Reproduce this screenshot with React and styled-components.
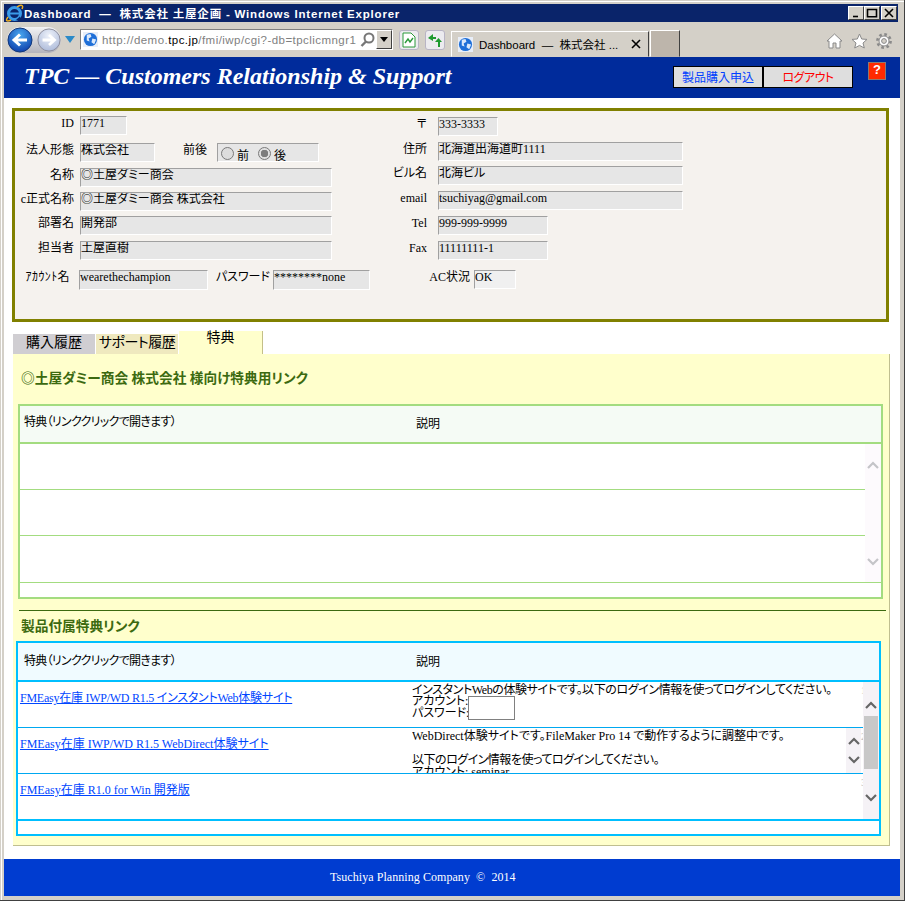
import React from 'react'
import styled, { createGlobalStyle } from 'styled-components'

const serif = `"Liberation Serif", "Noto Sans CJK JP", serif`
const sans = `"Liberation Sans", "Noto Sans CJK JP", sans-serif`

const Global = createGlobalStyle`
  html, body { margin: 0; padding: 0; overflow: hidden; background: #d4d0c8; }
  * { box-sizing: border-box; }
`

const Win = styled.div`
  width: 905px;
  height: 901px;
  padding: 4px 4px 4px 4px;
  display: flex;
  flex-direction: column;
  background: #d4d0c8;
  border-right: 1px solid #404040;
  border-bottom: 1px solid #404040;
  box-shadow: inset 1px 1px 0 #d4d0c8, inset 2px 2px 0 #fff;
  font-family: ${serif};
  font-size: 12px;
  font-feature-settings: "palt";
  color: #000;
`

/* ---- window chrome ---- */
const TitleBar = styled.div`
  height: 18px;
  flex: none;
  background: #0a246a;
  display: flex;
  align-items: center;
  padding: 0 1px 0 1px;
  margin-right: 2px;
`
const TitleText = styled.div`
  flex: 1;
  color: #fff;
  font: bold 11.5px ${sans};
  font-feature-settings: normal;
  letter-spacing: 0.8px;
  white-space: pre;
`
const WinBtn = styled.div`
  width: 16px;
  height: 14px;
  margin-left: ${p => p.$gap || 0}px;
  background: #d4d0c8;
  border: 1px solid;
  border-color: #fff #404040 #404040 #fff;
  display: flex;
  align-items: center;
  justify-content: center;
`
const Toolbar = styled.div`
  height: 35px;
  flex: none;
  display: flex;
  align-items: flex-end;
  padding-left: 3px;
  background: #d4d0c8;
`
const NavGroup = styled.div`
  width: 73px;
  height: 100%;
  display: flex;
  align-items: center;
`
const NavCapsule = styled.div`
  width: 54px;
  height: 26px;
  flex: none;
  display: flex;
  align-items: center;
  justify-content: space-between;
  border-radius: 13px;
  background: linear-gradient(#f2f2f4, #b4b4bc);
`
const AddressBox = styled.div`
  width: 313px;
  height: 21px;
  margin-bottom: 7px;
  display: flex;
  align-items: center;
  background: #fff;
  border: 1px solid #808080;
  border-right-color: #fff;
  border-bottom-color: #fff;
  outline: 1px solid #d4d0c8;
  padding-left: 2px;
`
const AddressText = styled.div`
  width: 257px;
  margin-left: 4px;
  overflow: hidden;
  white-space: nowrap;
  font: 11.5px ${sans};
  letter-spacing: 0.45px;
  color: #808080;
  b { font-weight: normal; color: #000; }
`
const ComboBtn = styled.div`
  width: 16px;
  height: 19px;
  margin-left: 1px;
  background: #d4d0c8;
  border: 1px solid;
  border-color: #fff #404040 #404040 #fff;
  display: flex;
  align-items: center;
  justify-content: center;
`
const ToolBtn = styled.div`
  width: 20px;
  height: 20px;
  margin: 0 0 7px ${p => p.$gap}px;
  border: 1px solid #b8b4c4;
  border-radius: 3px;
  background: #ecebef;
  display: flex;
  align-items: center;
  justify-content: center;
`
const BrowserTab = styled.div`
  width: 198px;
  height: 26px;
  margin-left: 6px;
  display: flex;
  align-items: center;
  padding: 0 6px;
  background: #d4d0c8;
  border: 1px solid;
  border-color: #fff #404040 transparent #fff;
  font: 11.5px ${sans};
  font-feature-settings: normal;
  white-space: pre;
`
const TabLabel = styled.span`
  flex: 1;
  margin-left: 6px;
`
const NewTab = styled.div`
  width: 30px;
  height: 27px;
  margin-left: 1px;
  background: #bdb5ab;
  border: 1px solid;
  border-color: #fff #404040 transparent #fff;
`
const ChromeIcons = styled.div`
  margin: 0 0 8px auto;
  display: flex;
  align-items: center;
  gap: 8px;
  padding-right: 8px;
`

/* ---- page header ---- */
const Header = styled.div`
  height: 41px;
  flex: none;
  background: #002b9b;
  display: flex;
  align-items: flex-start;
`
const Brand = styled.div`
  margin: 3px 0 0 20px;
  width: 649px;
  font: italic bold 24px/32px ${serif};
  color: #fff;
  white-space: nowrap;
`
const BrandDash = styled.span`
  letter-spacing: 6px;
`
const HeadBtn = styled.div`
  width: ${p => p.$w}px;
  height: 22px;
  margin-top: 9px;
  border: 1px solid #000;
  background: #dedede;
  color: ${p => p.$color};
  display: flex;
  align-items: center;
  justify-content: center;
  font-size: 12px;
  letter-spacing: ${p => p.$track || 0}px;
`
const Help = styled.div`
  width: 18px;
  height: 18px;
  margin: 5px 0 0 15px;
  background: #ff2a00;
  border: 1px solid #8c7a70;
  color: #fff;
  font: bold 13px/13px ${sans};
  text-align: center;
`

/* ---- main ---- */
const Main = styled.div`
  flex: 1;
  background: #fff;
  padding: 10px 0 0 8px;
`
const InfoPanel = styled.div`
  width: 877px;
  height: 214px;
  background: #f5f2ee;
  border: 3px solid #808000;
  display: flex;
`
const Col = styled.div`
  width: ${p => p.$w}px;
  padding-top: ${p => p.$top}px;
`
const Row = styled.div`
  display: flex;
  height: ${p => p.$h || 19}px;
  margin-top: ${p => p.$top || 0}px;
`
const Label = styled.div`
  width: ${p => p.$w}px;
  margin-right: ${p => p.$gap}px;
  text-align: right;
  line-height: 14px;
  white-space: nowrap;
  flex: none;
  letter-spacing: ${p => p.$track || 0}px;
`
const Field = styled.div`
  width: ${p => p.$w}px;
  height: 100%;
  flex: none;
  background: ${p => p.$bg || '#e6e6e6'};
  border: 1px solid;
  border-color: #a0a0a0 #fff #fff #a0a0a0;
  line-height: 13px;
  white-space: nowrap;
  overflow: hidden;
`
const RadioBox = styled(Field)`
  display: flex;
  align-items: flex-start;
  padding: 3px 0 0 3px;
`
const Radio = styled.span`
  width: 13px;
  height: 13px;
  flex: none;
  border-radius: 50%;
  border: 1px solid #7a7a7a;
  background: ${p => (p.$on ? 'radial-gradient(circle, #7d7d7d 0 3.5px, #e0e0e0 4px)' : '#dcdcdc')};
`
const RadioText = styled.span`
  width: ${p => p.$w}px;
  padding: 3px 0 0 3px;
  flex: none;
  line-height: 13px;
`

const Tabs = styled.div`
  margin: 9px 0 0 1px;
  height: 23px;
  display: flex;
  align-items: flex-end;
`
const Tab = styled.div`
  width: ${p => p.$w}px;
  height: ${p => p.$h}px;
  margin-right: 1px;
  background: ${p => p.$bg};
  border-right: ${p => (p.$active ? '1px solid #c4bf88' : 'none')};
  text-align: center;
  font-size: 14px;
  letter-spacing: ${p => p.$track || 0}px;
  line-height: ${p => (p.$active ? 14 : 18)}px;
  white-space: nowrap;
`
const TabBody = styled.div`
  width: 877px;
  height: 492px;
  margin-left: 1px;
  padding-left: 5px;
  background: #ffffcc;
  border-right: 1px solid #c0bf90;
  border-bottom: 1px solid #c0bf90;
`
const Heading = styled.div`
  height: ${p => p.$h}px;
  padding: 0 0 ${p => p.$lift}px 3px;
  display: flex;
  align-items: center;
  color: #3c6a10;
  font-weight: bold;
  font-size: 13.7px;
  white-space: nowrap;
`
const Table = styled.div`
  width: 865px;
  height: 195px;
  margin-left: ${p => p.$left || 0}px;
  border: 2px solid ${p => p.$color};
  background: #fff;
  display: flex;
  flex-direction: column;
`
const THead = styled.div`
  height: ${p => p.$h}px;
  flex: none;
  display: grid;
  grid-template-columns: ${p => p.$first}px 1fr;
  background: ${p => p.$bg};
  border-bottom: 2px solid ${p => p.$color};
  box-sizing: content-box;
  align-items: center;
`
const HeadCell = styled.div`
  padding-left: ${p => p.$pad}px;
  margin-top: ${p => p.$top || 0}px;
  letter-spacing: ${p => p.$track || 0}px;
  white-space: nowrap;
`
const TBodyWrap = styled.div`
  display: flex;
  height: ${p => p.$h}px;
  flex: none;
  border-bottom: ${p => p.$line};
  box-sizing: content-box;
`
const Rows = styled.div`
  flex: 1;
  display: flex;
  flex-direction: column;
`
const TRow = styled.div`
  height: ${p => p.$h || 45}px;
  flex: none;
  box-sizing: content-box;
  display: grid;
  grid-template-columns: 394px 1fr;
  border-top: ${p => (p.$first ? 'none' : `1px solid ${p.$color}`)};
`
const LinkCell = styled.div`
  padding: 6px 0 0 2px;
`
const ItemLink = styled.a`
  color: #0046ff;
  text-decoration: underline;
  white-space: nowrap;
  letter-spacing: ${p => p.$track || 0}px;
`
const DescCell = styled.div`
  display: flex;
  height: 45px;
  overflow: hidden;
`
const DescText = styled.div`
  flex: 1;
  overflow: hidden;
  line-height: 12px;
  white-space: nowrap;
  padding-top: 2px;
`
const DescLine = styled.div`
  letter-spacing: ${p => p.$track || 0}px;
`
const Blank = styled.div`
  height: 12px;
`
const CredRow = styled.div`
  display: flex;
  align-items: flex-start;
`
const CredLabels = styled.div`
  width: 56px;
  flex: none;
  line-height: 11.5px;
`
const PassInput = styled.div`
  width: 47px;
  height: 24px;
  flex: none;
  background: #fff;
  border: 1px solid #808080;
`
const RowNo = styled.div`
  width: 2px;
  flex: none;
  margin-top: ${p => p.$top}px;
  color: #c0c0c0;
  font-size: 10px;
  line-height: 10px;
  overflow: hidden;
`
const Scroll = styled.div`
  width: ${p => p.$w || 16}px;
  flex: none;
  background: ${p => p.$bg};
  display: flex;
  flex-direction: column;
  align-items: center;
  padding: ${p => p.$pad};
  justify-content: ${p => p.$justify || 'space-between'};
`
const Thumb = styled.div`
  width: 14px;
  height: 53px;
  margin: 7px 0 25px;
  flex: none;
  background: #c8c8c8;
`
const Strip = styled.div`
  flex: 1;
`
const Divider = styled.div`
  width: 867px;
  height: 1px;
  margin: 11px 0 0 1px;
  background: #3c6a10;
`

const Footer = styled.div`
  height: 37px;
  flex: none;
  background: #003cd0;
  color: #fff;
  display: flex;
  align-items: center;
  padding-left: 326px;
  font-size: 12px;
  letter-spacing: 0.06px;
  white-space: pre;
`

/* ---- drawings ---- */
const Chevron = ({ up, color, size = 12 }) => (
  <svg width={size} height={size * 0.75} viewBox="0 0 12 9">
    <polyline points={up ? '1,8 6,3 11,8' : '1,1 6,6 11,1'} fill="none" stroke={color} strokeWidth="2.2" />
  </svg>
)

const Globe = ({ size = 15 }) => (
  <svg width={size} height={size} viewBox="0 0 16 16" style={{ flex: 'none' }}>
    <rect width="16" height="16" fill="#e8eef8" />
    <circle cx="8" cy="8" r="7" fill="#1e6fd8" />
    <path d="M4 3 L8 2 L9 5 L6 7 L7 10 L4 9 Z M10 7 L14 8 L12 13 L9 11 Z" fill="#dbe9fb" />
  </svg>
)

const IeLogo = () => (
  <svg width="19" height="18" viewBox="0 0 19 18" style={{ flex: 'none' }}>
    <circle cx="9.5" cy="9.5" r="6" fill="none" stroke="#3a9be8" strokeWidth="3" />
    <path d="M4 9.5 H15" stroke="#3a9be8" strokeWidth="2" />
    <path d="M15 12.5 L11 16 H16 Z" fill="#0a246a" />
    <path d="M3 13 C0 17 2 18 6 16 M12 3 C16 0 19 1 17 5" fill="none" stroke="#f0b020" strokeWidth="1.5" />
  </svg>
)

const NavRound = ({ pale, size = 26 }) => (
  <svg width={size} height={size} viewBox="0 0 26 26" style={{ flex: 'none' }}>
    <defs>
      <radialGradient id={pale ? 'navPale' : 'navBlue'} cx="50%" cy="30%" r="75%">
        <stop offset="0" stopColor={pale ? '#eef2fa' : '#4aa8f0'} />
        <stop offset="1" stopColor={pale ? '#aab8d8' : '#0a3aa8'} />
      </radialGradient>
    </defs>
    <circle cx="13" cy="13" r="12" fill={`url(#${pale ? 'navPale' : 'navBlue'})`} stroke={pale ? '#8a8a98' : '#12387a'} />
    <path
      d={pale ? 'M6 13 H18 M13 7.5 L19 13 L13 18.5' : 'M20 13 H8 M13 7.5 L7 13 L13 18.5'}
      fill="none"
      stroke="#fff"
      strokeWidth="3"
    />
  </svg>
)

const DropArrow = () => (
  <svg width="10" height="7" viewBox="0 0 10 7" style={{ flex: 'none', marginLeft: 4 }}>
    <path d="M0 0 H10 L5 7 Z" fill="#2a8ac8" />
  </svg>
)

const SearchIcon = () => (
  <svg width="15" height="15" viewBox="0 0 15 15" style={{ flex: 'none', marginLeft: 4 }}>
    <circle cx="9" cy="6" r="4.5" fill="none" stroke="#777" strokeWidth="2" />
    <path d="M6 9.5 L1.5 14" stroke="#777" strokeWidth="2.4" />
  </svg>
)

const DocIcon = () => (
  <svg width="14" height="16" viewBox="0 0 14 16">
    <path d="M1 1 H9 L13 5 V15 H1 Z" fill="#fff" stroke="#2a9a3a" />
    <path d="M3 11 L6 7 L8 10 L11 6" fill="none" stroke="#2a9a3a" strokeWidth="1.4" />
  </svg>
)

const RefreshIcon = () => (
  <svg width="16" height="15" viewBox="0 0 16 15">
    <path d="M6 1 L1 5 L6 8 V6 H9 V4 H6 Z" fill="#1f9a30" />
    <path d="M11 14 V9 H8 L11.5 5 L15 9 H13 V14 Z" fill="#1f9a30" />
  </svg>
)

const HomeIcon = () => (
  <svg width="17" height="16" viewBox="0 0 17 16">
    <path d="M1 8 L8.5 1 L16 8 L14 8 V15 H10 V10 H7 V15 H3 V8 Z" fill="#fff" stroke="#8a8a8a" />
  </svg>
)

const StarIcon = () => (
  <svg width="17" height="16" viewBox="0 0 17 16">
    <path d="M8.5 1 L10.7 6 L16 6.4 L12 10 L13.3 15 L8.5 12.4 L3.7 15 L5 10 L1 6.4 L6.3 6 Z" fill="#fff" stroke="#8a8a8a" />
  </svg>
)

const GearIcon = () => (
  <svg width="16" height="16" viewBox="0 0 16 16">
    <circle cx="8" cy="8" r="6.6" fill="none" stroke="#8a8a8a" strokeWidth="2.6" strokeDasharray="2.6 2.6" />
    <circle cx="8" cy="8" r="5" fill="#fff" stroke="#8a8a8a" strokeWidth="1" />
    <circle cx="8" cy="8" r="2.4" fill="#d4d0c8" stroke="#8a8a8a" />
  </svg>
)

const WinGlyph = ({ d }) => (
  <svg width="12" height="10" viewBox="0 0 12 10">
    <path d={d} fill="none" stroke="#000" strokeWidth="1.6" />
  </svg>
)

const leftRows = [
  { label: '名称', value: '◎土屋ダミー商会', top: 6 },
  { label: 'c正式名称', value: '◎土屋ダミー商会 株式会社', top: 5 },
  { label: '部署名', value: '開発部', top: 5 },
  { label: '担当者', value: '土屋直樹', top: 6 },
]

const rightRows = [
  { label: '〒', value: '333-3333', w: 60, top: 0 },
  { label: '住所', value: '北海道出海道町1111', w: 245, top: 6 },
  { label: 'ビル名', value: '北海ビル', w: 245, top: 5 },
  { label: 'email', value: 'tsuchiyag@gmail.com', w: 245, top: 6 },
  { label: 'Tel', value: '999-999-9999', w: 110, top: 6 },
  { label: 'Fax', value: '11111111-1', w: 110, top: 6 },
]

const GREEN = '#a3dc80'
const CYAN = '#00bfff'
const CYAN_LINE = '#00a8f0'

const App = () => {
  return (
    <Win>
      <Global />
      <TitleBar>
        <IeLogo />
        <TitleText>Dashboard  ―  株式会社 土屋企画 - Windows Internet Explorer</TitleText>
        <WinBtn><WinGlyph d="M3 8.5 H8" /></WinBtn>
        <WinBtn><WinGlyph d="M1.5 1.5 H10.5 V8.8 H1.5 Z" /></WinBtn>
        <WinBtn $gap={1}><WinGlyph d="M2 1 L10 9 M10 1 L2 9" /></WinBtn>
      </TitleBar>

      <Toolbar>
        <NavGroup>
          <NavCapsule>
            <NavRound />
            <NavRound pale size={24} />
          </NavCapsule>
          <DropArrow />
        </NavGroup>
        <AddressBox>
          <Globe />
          <AddressText>http://demo.<b>tpc.jp</b>/fmi/iwp/cgi?-db=tpclicmngr118</AddressText>
          <SearchIcon />
          <ComboBtn><svg width="8" height="5" viewBox="0 0 8 5"><path d="M0 0 H8 L4 5 Z" /></svg></ComboBtn>
        </AddressBox>
        <ToolBtn $gap={6}><DocIcon /></ToolBtn>
        <ToolBtn $gap={6}><RefreshIcon /></ToolBtn>
        <BrowserTab>
          <Globe />
          <TabLabel>Dashboard  ―  株式会社 ...</TabLabel>
          <WinGlyph d="M2 1 L10 9 M10 1 L2 9" />
        </BrowserTab>
        <NewTab />
        <ChromeIcons>
          <HomeIcon />
          <StarIcon />
          <GearIcon />
        </ChromeIcons>
      </Toolbar>

      <Header>
        <Brand>TPC <BrandDash>―</BrandDash>Customers Relationship &amp; Support</Brand>
        <HeadBtn $w={90} $color="#0040ff">製品購入申込</HeadBtn>
        <HeadBtn $w={90} $color="#ff0000" $track={-0.5}>ログアウト</HeadBtn>
        <Help>?</Help>
      </Header>

      <Main>
        <InfoPanel>
          <Col $w={357} $top={5}>
            <Row>
              <Label $w={59} $gap={6}>ID</Label>
              <Field $w={47}>1771</Field>
            </Row>
            <Row $top={8}>
              <Label $w={59} $gap={6}>法人形態</Label>
              <Field $w={75}>株式会社</Field>
              <Label $w={52} $gap={10}>前後</Label>
              <RadioBox $w={102}>
                <Radio />
                <RadioText $w={24}>前</RadioText>
                <Radio $on />
                <RadioText $w={20}>後</RadioText>
              </RadioBox>
            </Row>
            {leftRows.map(r => (
              <Row key={r.label} $top={r.top}>
                <Label $w={59} $gap={6}>{r.label}</Label>
                <Field $w={252}>{r.value}</Field>
              </Row>
            ))}
            <Row $top={10} $h={20}>
              <Label $w={55} $gap={9} $track={0.4}>ｱｶｳﾝﾄ名</Label>
              <Field $w={129}>wearethechampion</Field>
              <Label $w={62} $gap={3}>パスワード</Label>
              <Field $w={97}>********none</Field>
            </Row>
          </Col>
          <Col $w={500} $top={6}>
            {rightRows.map(r => (
              <Row key={r.label} $top={r.top}>
                <Label $w={55} $gap={11}>{r.label}</Label>
                <Field $w={r.w}>{r.value}</Field>
              </Row>
            ))}
            <Row $top={10}>
              <Label $w={98} $gap={4}>AC状況</Label>
              <Field $w={42} $bg="#f0f0f0">OK</Field>
            </Row>
          </Col>
        </InfoPanel>

        <Tabs>
          <Tab $w={82} $h={20} $bg="#d0ced2">購入履歴</Tab>
          <Tab $w={82} $h={20} $bg="#efe9bf" $track={-0.5}>サポート履歴</Tab>
          <Tab $w={84} $h={23} $bg="#ffffcc" $active>特典</Tab>
        </Tabs>

        <TabBody>
          <Heading $h={50} $lift={5}>◎土屋ダミー商会 株式会社 様向け特典用リンク</Heading>
          <Table $color={GREEN}>
            <THead $h={36} $first={392} $bg="#f5fbf5" $color={GREEN}>
              <HeadCell $pad={4} $top={-6} $track={-0.7}>特典（リンククリックで開きます）</HeadCell>
              <HeadCell $pad={4} $top={-2}>説明</HeadCell>
            </THead>
            <TBodyWrap $h={138} $line={`1px solid ${GREEN}`}>
              <Rows>
                <TRow $first $color={GREEN} />
                <TRow $color={GREEN} />
                <TRow $h={46} $color={GREEN} />
              </Rows>
              <Scroll $bg="#fdfafd" $pad="16px 0 15px">
                <Chevron up color="#c4c4c8" />
                <Chevron color="#c4c4c8" />
              </Scroll>
            </TBodyWrap>
            <Strip />
          </Table>

          <Divider />
          <Heading $h={30} $lift={3}>製品付属特典リンク</Heading>

          <Table $color={CYAN} $left={-2}>
            <THead $h={37} $first={394} $bg="#f0fbff" $color={CYAN}>
              <HeadCell $pad={6} $top={-3} $track={-0.7}>特典（リンククリックで開きます）</HeadCell>
              <HeadCell $pad={4} $top={-1}>説明</HeadCell>
            </THead>
            <TBodyWrap $h={137} $line={`2px solid ${CYAN}`}>
              <Rows>
                <TRow $first $color={CYAN_LINE}>
                  <LinkCell><ItemLink $track={-0.25}>FMEasy在庫 IWP/WD R1.5 インスタントWeb体験サイト</ItemLink></LinkCell>
                  <DescCell>
                    <DescText>
                      <DescLine $track={-0.4}>インスタントWebの体験サイトです。以下のログイン情報を使ってログインしてください。</DescLine>
                      <CredRow>
                        <CredLabels>
                          <div>アカウント:</div>
                          <div>パスワード:</div>
                        </CredLabels>
                        <PassInput />
                      </CredRow>
                    </DescText>
                    <RowNo $top={4}>1</RowNo>
                  </DescCell>
                </TRow>
                <TRow $color={CYAN_LINE}>
                  <LinkCell><ItemLink>FMEasy在庫 IWP/WD R1.5 WebDirect体験サイト</ItemLink></LinkCell>
                  <DescCell>
                    <DescText>
                      <DescLine>WebDirect体験サイトです。FileMaker Pro 14 で動作するように調整中です。</DescLine>
                      <Blank />
                      <DescLine $track={-0.5}>以下のログイン情報を使ってログインしてください。</DescLine>
                      <DescLine>アカウント: seminar</DescLine>
                    </DescText>
                    <Scroll $w={15} $bg="#f5f2f6" $pad="8px 0 8px">
                      <Chevron up color="#666" />
                      <Chevron color="#666" />
                    </Scroll>
                    <RowNo $top={4}>2</RowNo>
                  </DescCell>
                </TRow>
                <TRow $color={CYAN_LINE}>
                  <LinkCell><ItemLink>FMEasy在庫 R1.0 for Win 開発版</ItemLink></LinkCell>
                  <DescCell>
                    <DescText />
                    <RowNo $top={4}>3</RowNo>
                  </DescCell>
                </TRow>
              </Rows>
              <Scroll $bg="#f5f2f6" $pad="18px 0 0" $justify="flex-start">
                <Chevron up color="#666" />
                <Thumb />
                <Chevron color="#666" />
              </Scroll>
            </TBodyWrap>
            <Strip />
          </Table>
        </TabBody>
      </Main>

      <Footer>Tsuchiya Planning Company  ©  2014</Footer>
    </Win>
  )
}

export default App
